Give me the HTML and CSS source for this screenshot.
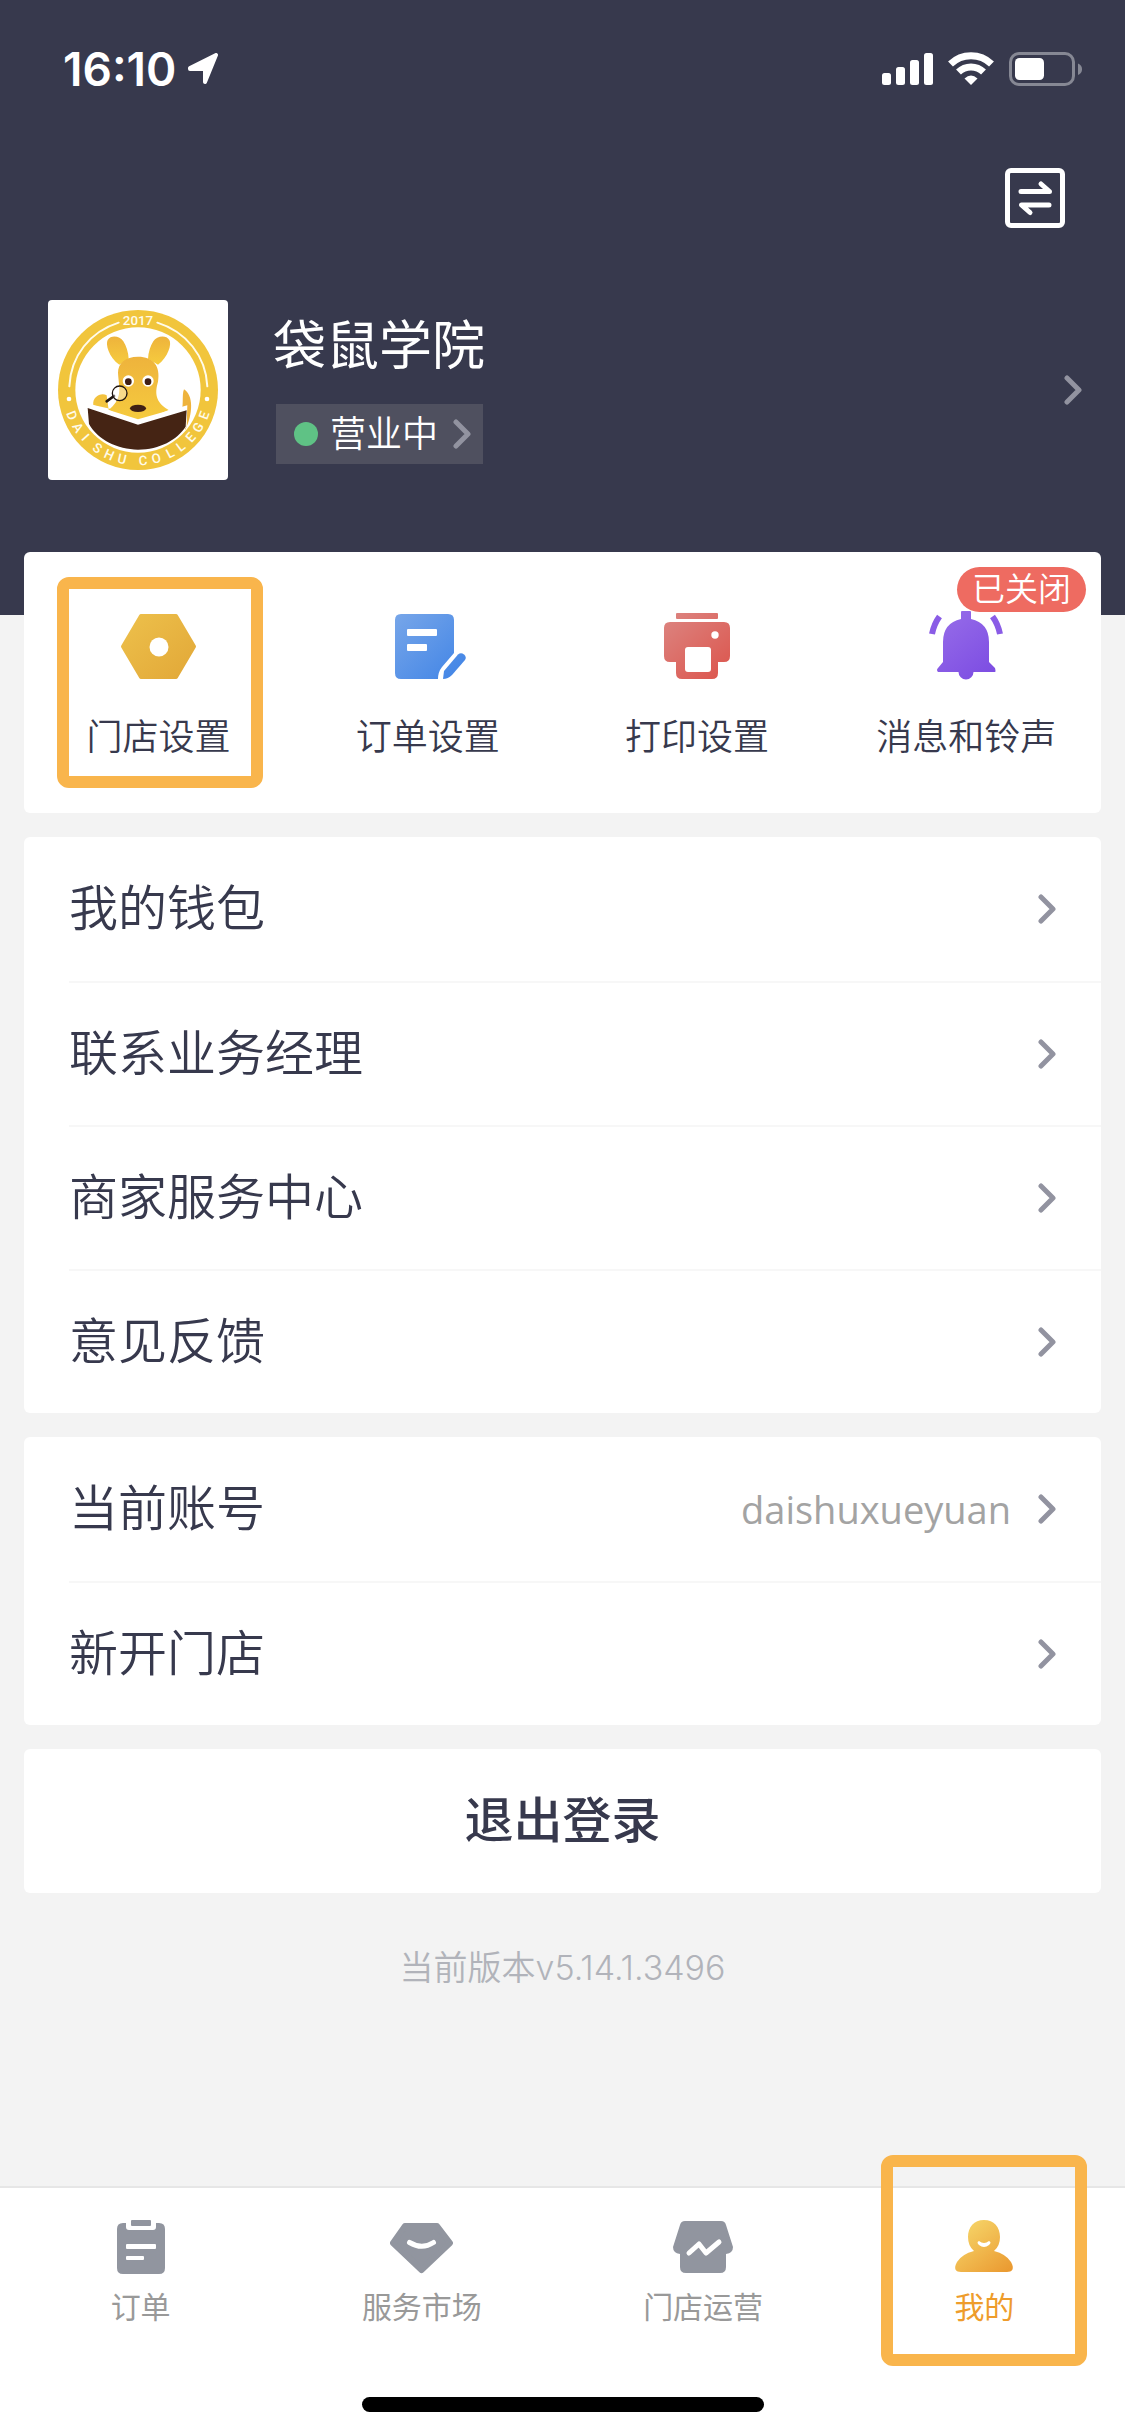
FILE: index.html
```html
<!DOCTYPE html>
<html lang="zh-CN">
<head>
    <meta charset="UTF-8" />
    <meta name="viewport" content="width=device-width, initial-scale=1.0" />
    <title>我的</title>
    <link rel="stylesheet" href="styles.css">
</head>
<body>

<svg class="defs" width="0" height="0" aria-hidden="true">
    <defs>
        <linearGradient id="gold" x1="0" y1="0" x2="1" y2="1">
            <stop offset="0" stop-color="#edc04b" /><stop offset="1" stop-color="#e2a838" />
        </linearGradient>
        <linearGradient id="blue" gradientUnits="userSpaceOnUse" x1="7" y1="4" x2="70" y2="69">
            <stop offset="0" stop-color="#77a6e9" /><stop offset="1" stop-color="#4285e6" />
        </linearGradient>
        <linearGradient id="red" gradientUnits="userSpaceOnUse" x1="7" y1="4" x2="64" y2="69">
            <stop offset="0" stop-color="#dc8581" /><stop offset="1" stop-color="#dc574f" />
        </linearGradient>
        <linearGradient id="purple" gradientUnits="userSpaceOnUse" x1="11" y1="4" x2="64" y2="69">
            <stop offset="0" stop-color="#976de9" /><stop offset="1" stop-color="#7c4ce2" />
        </linearGradient>
        <linearGradient id="person" gradientUnits="userSpaceOnUse" x1="16" y1="2" x2="56" y2="54">
            <stop offset="0" stop-color="#f6d468" /><stop offset="1" stop-color="#ea9930" />
        </linearGradient>
        <linearGradient id="fur" x1="0" y1="0" x2="0" y2="1">
            <stop offset="0" stop-color="#eeb33c" /><stop offset="1" stop-color="#f6cc3e" />
        </linearGradient>
        <symbol id="chevron" viewBox="0 0 18 30">
            <path d="M3 3l12 12L3 27" fill="none" stroke="currentColor" stroke-width="5" stroke-linecap="round" stroke-linejoin="round" />
        </symbol>
    </defs>
</svg>

<header class="hero">
    <div class="status-bar">
        <span class="time">16:10</span>
        <svg class="location" viewBox="0 0 30 32" aria-hidden="true">
            <path d="M2 15L28 2L17 29V16H2z" fill="#fff" stroke="#fff" stroke-width="4" stroke-linejoin="round" />
        </svg>
        <div class="status-icons">
            <svg width="51" height="34" viewBox="0 0 51 34" fill="#fff" aria-hidden="true">
                <rect x="0" y="21" width="9" height="12" rx="2.5" />
                <rect x="14" y="15" width="9" height="18" rx="2.5" />
                <rect x="28" y="8" width="9" height="25" rx="2.5" />
                <rect x="42" y="1" width="9" height="32" rx="2.5" />
            </svg>
            <svg width="46" height="34" viewBox="0 0 46 34" fill="none" stroke="#fff" aria-hidden="true">
                <path d="M2.5 12a29.5 29.5 0 0 1 41 0" stroke-width="7" />
                <path d="M10.5 20a18 18 0 0 1 25 0" stroke-width="7" />
                <path d="M16.500 26.500Q23 20.500 29.500 26.500L23 33z" fill="#fff" stroke="none" />
            </svg>
            <svg width="74" height="34" viewBox="0 0 74 34" aria-hidden="true">
                <rect x="1.500" y="1.500" width="63" height="31" rx="8.500" fill="none" stroke="#868894" stroke-width="3" />
                <rect x="6" y="6" width="29" height="22" rx="4.500" fill="#fff" />
                <path d="M69 11.500Q73 13 73 17.300T69 23z" fill="#868894" />
            </svg>
        </div>
    </div>

    <div class="toolbar">
        <button type="button" class="switch-btn" aria-label="切换门店">
            <svg viewBox="0 0 60 60" fill="none" stroke="#fff" stroke-width="5" stroke-linecap="round" stroke-linejoin="round" aria-hidden="true">
                <rect x="2.500" y="2.500" width="55" height="55" rx="3.500" />
                <path d="M16 23.500H44.500L36 16M44 37H16.500L25 44.500" />
            </svg>
        </button>
    </div>

    <div class="profile">
        <svg class="avatar" viewBox="54 60 540 540" role="img" aria-label="袋鼠学院">
            <circle cx="324" cy="330" r="240" fill="#f1c53c" />
            <circle cx="324" cy="330" r="188" fill="#fff" />
            <path d="M118 319C122 228 180 155 266 128M532 319C528 228 468 155 382 128" fill="none" stroke="#fffbea" stroke-width="6" stroke-linecap="round" />
            <circle cx="117" cy="357" r="7" fill="#fff" />
            <circle cx="531" cy="357" r="7" fill="#fff" />
            <g class="logo-text" text-anchor="middle">
                <text x="324" y="136">2017</text>
                <text x="324" y="556" transform="rotate(69 324 330)">D</text>
                <text x="324" y="556" transform="rotate(58 324 330)">A</text>
                <text x="324" y="556" transform="rotate(48 324 330)">I</text>
                <text x="324" y="556" transform="rotate(35 324 330)">S</text>
                <text x="324" y="556" transform="rotate(24 324 330)">H</text>
                <text x="324" y="556" transform="rotate(13 324 330)">U</text>
                <text x="324" y="556" transform="rotate(-4 324 330)">C</text>
                <text x="324" y="556" transform="rotate(-15 324 330)">O</text>
                <text x="324" y="556" transform="rotate(-27 324 330)">L</text>
                <text x="324" y="556" transform="rotate(-37 324 330)">L</text>
                <text x="324" y="556" transform="rotate(-48 324 330)">E</text>
                <text x="324" y="556" transform="rotate(-58 324 330)">G</text>
                <text x="324" y="556" transform="rotate(-69 324 330)">E</text>
            </g>
            <path d="M462 328C490 345 490 400 466 450L450 400C464 385 454 345 462 328z" fill="#eeb33c" />
            <path d="M268 254C236 232 226 192 233 180C243 164 270 168 280 184Q294 206 296 236zM384 254C414 232 426 192 418 180C408 164 380 168 370 184Q356 206 354 236z" fill="url(#fur)" />
            <path d="M324 230C286 230 264 250 264 278C266 320 280 352 240 386L190 375C186 350 214 336 230 346L236 390L324 430L416 390C376 366 374 340 384 305C392 258 370 230 324 230z" fill="url(#fur)" />
            <circle cx="295" cy="303" r="17" fill="#fff" /><circle cx="295" cy="305" r="10" fill="#402015" />
            <circle cx="354" cy="303" r="17" fill="#fff" /><circle cx="354" cy="305" r="10" fill="#402015" />
            <ellipse cx="324" cy="385" rx="24" ry="11" fill="#402015" />
            <path d="M252 348L230 364" stroke="#201510" stroke-width="8" stroke-linecap="round" />
            <circle cx="269" cy="340" r="22" fill="#fff" fill-opacity=".4" stroke="#201510" stroke-width="4" />
            <path d="M172 370L324 418L472 376L470 440C440 480 395 512 324 514C250 512 200 480 174 432z" fill="#fff" />
            <path d="M173 384L324 434L470 391L467 440C440 480 390 508 324 509C262 508 204 480 177 432z" fill="#452414" />
        </svg>
        <div class="shop">
            <h1>袋鼠学院</h1>
            <button type="button" class="shop-status">
                <span class="dot"></span>
                <span>营业中</span>
                <svg class="chevron" aria-hidden="true"><use href="#chevron" /></svg>
            </button>
        </div>
        <a class="profile-link" href="#" aria-label="门店信息">
            <svg class="chevron" aria-hidden="true"><use href="#chevron" /></svg>
        </a>
    </div>
</header>

<main>
    <section class="card shortcuts">
        <a class="shortcut marked" href="#">
            <svg viewBox="0 0 80 72" aria-hidden="true">
                <path d="M22 6H57L75 36.500L57 67H22L4 36.500z" fill="url(#gold)" stroke="url(#gold)" stroke-width="4" stroke-linejoin="round" />
                <circle cx="40" cy="37" r="9.500" fill="#fff" />
            </svg>
            <span>门店设置</span>
        </a>
        <a class="shortcut" href="#">
            <svg viewBox="0 0 80 72" aria-hidden="true">
                <path d="M13 4H60Q66 4 66 10V43L54 57Q50 62 50 69H13Q7 69 7 63V10Q7 4 13 4z" fill="url(#blue)" />
                <path d="M55 69L56 61L70 44.500Q73 42 76 44.500Q79 47 77 50L64 65Q60 69 55 69z" fill="url(#blue)" />
                <rect x="19" y="19" width="30" height="7" rx="1" fill="#fff" />
                <rect x="19" y="34" width="20" height="7" rx="1" fill="#fff" />
            </svg>
            <span>订单设置</span>
        </a>
        <a class="shortcut" href="#">
            <svg viewBox="0 0 80 72" aria-hidden="true">
                <rect x="19" y="3" width="42" height="6" rx="1" fill="url(#red)" />
                <path d="M13 12H67Q73 12 73 18V46Q73 52 67 52H61V63Q61 69 55 69H25Q19 69 19 63V52H13Q7 52 7 46V18Q7 12 13 12z" fill="url(#red)" />
                <rect x="28" y="37" width="26" height="25" rx="3" fill="#fff" />
                <circle cx="58" cy="25" r="3.700" fill="#fff" />
            </svg>
            <span>打印设置</span>
        </a>
        <a class="shortcut" href="#">
            <em class="badge">已关闭</em>
            <svg viewBox="0 0 80 72" aria-hidden="true">
                <path d="M35 2Q35 1 36 1H44Q45 1 45 2V9Q63 13 63 32V52L69 58Q70 62 69 62H47.500A7.500 7.500 0 0 1 32.500 62H12Q10 60 12 58L17 52V32Q17 13 35 9z" fill="url(#purple)" />
                <path d="M13.500 6.500Q8 14 6 24M66.500 6.500Q72 14 74 24" fill="none" stroke="#8a5ce6" stroke-width="6" />
            </svg>
            <span>消息和铃声</span>
        </a>
    </section>

    <ul class="card menu">
        <li><a href="#"><span>我的钱包</span><svg class="chevron" aria-hidden="true"><use href="#chevron" /></svg></a></li>
        <li><a href="#"><span>联系业务经理</span><svg class="chevron" aria-hidden="true"><use href="#chevron" /></svg></a></li>
        <li><a href="#"><span>商家服务中心</span><svg class="chevron" aria-hidden="true"><use href="#chevron" /></svg></a></li>
        <li><a href="#"><span>意见反馈</span><svg class="chevron" aria-hidden="true"><use href="#chevron" /></svg></a></li>
    </ul>

    <ul class="card menu">
        <li><a href="#"><span>当前账号</span><span class="account">daishuxueyuan</span><svg class="chevron" aria-hidden="true"><use href="#chevron" /></svg></a></li>
        <li><a href="#"><span>新开门店</span><svg class="chevron" aria-hidden="true"><use href="#chevron" /></svg></a></li>
    </ul>

    <button type="button" class="card logout">退出登录</button>

    <p class="version">当前版本v5.14.1.3496</p>
</main>

<footer>
    <nav class="tabs">
        <a class="tab" href="#">
            <svg viewBox="0 0 64 56" fill="#91959f" aria-hidden="true">
                <path d="M14 4H17V8Q17 11 20 11H44Q47 11 47 8V4H50Q56 4 56 10V49Q56 55 50 55H14Q8 55 8 49V10Q8 4 14 4z" />
                <rect x="22" y="1" width="20" height="6" rx="1" />
                <path d="M18 25H46Q47 25 47 26V29Q47 30 46 30H18Q17 30 17 29V26Q17 25 18 25zM18 37H34Q35 37 35 38V40Q35 41 34 41H18Q17 41 17 40V38Q17 37 18 37z" fill="#fff" />
            </svg>
            <span>订单</span>
        </a>
        <a class="tab" href="#">
            <svg viewBox="0 0 64 56" aria-hidden="true">
                <path d="M15 7H47L60 24L31.500 51L3 24z" fill="#91959f" stroke="#91959f" stroke-width="6" stroke-linejoin="round" />
                <path d="M19.500 23.500Q32 31 43.500 23.500" fill="none" stroke="#fff" stroke-width="5" stroke-linecap="round" />
            </svg>
            <span>服务市场</span>
        </a>
        <a class="tab" href="#">
            <svg viewBox="0 0 64 56" aria-hidden="true">
                <path d="M14 2H50Q54 2 55 6L62 28Q62 34 55 35V48Q55 54 49 54H15Q9 54 9 48V35Q2 34 2 28L9 6Q10 2 14 2z" fill="#91959f" />
                <path d="M18 34L28 25L35 34L48 23" fill="none" stroke="#fff" stroke-width="5" stroke-linecap="round" stroke-linejoin="round" />
            </svg>
            <span>门店运营</span>
        </a>
        <a class="tab active marked" href="#">
            <svg viewBox="0 0 64 56" aria-hidden="true">
                <path d="M32 1C42 1 48 8 48 18Q48 27 42 32Q54 35 59 43C63 50 60 53 55 53H9C4 53 1 50 5 43Q10 35 22 32Q16 27 16 18C16 8 22 1 32 1z" fill="url(#person)" />
                <path d="M27 22Q32 26 37 22Q40 23 37 26Q32 30 27 26Q24 23 27 22z" fill="#fff" />
            </svg>
            <span>我的</span>
        </a>
    </nav>
    <div class="home-indicator"></div>
</footer>

</body>
</html>
```
FILE: styles.css
```css
:root {
    --dark: #37394d;
    --bg: #f3f3f3;
    --white: #fff;
    --grey: #999;
    --chevron: #9293a0;
    --mark: #f9b54c;
}

* {
    box-sizing: border-box;
    margin: 0;
    padding: 0;
}

body {
    display: flex;
    flex-direction: column;
    min-height: 100vh;
    font-family: 'Inter', 'Noto Sans CJK SC', sans-serif;
    font-weight: 350;
    background: var(--bg);
    color: var(--dark);
}

a {
    color: inherit;
    text-decoration: none;
}

button {
    border: none;
    background: none;
    font: inherit;
    color: inherit;
    cursor: pointer;
}

.defs {
    position: absolute;
}

.chevron {
    width: 18px;
    height: 30px;
    flex-shrink: 0;
    color: var(--chevron);
}

/* Header */
.hero {
    background: var(--dark);
    color: var(--white);
    padding-bottom: 135px;
}

.status-bar {
    display: flex;
    align-items: center;
    height: 138px;
    padding: 0 42px 0 63px;
}

.time {
    font-size: 46px;
    line-height: 56px;
    font-weight: 600;
}

.location {
    width: 30px;
    height: 32px;
    margin-left: 12px;
}

.status-icons {
    display: flex;
    gap: 15px;
    margin-left: auto;
}

.toolbar {
    display: flex;
    justify-content: flex-end;
    padding: 30px 60px 0;
}

.switch-btn,
.switch-btn svg {
    display: block;
    width: 60px;
    height: 60px;
}

.profile {
    display: flex;
    align-items: center;
    padding: 72px 43px 0 48px;
}

.avatar {
    width: 180px;
    height: 180px;
    border-radius: 4px;
    background: var(--white);
}

.logo-text {
    font-family: 'Liberation Sans Narrow', 'Roboto', sans-serif;
    font-size: 40px;
    font-weight: 500;
    fill: #fffbea;
}

.shop {
    margin-left: 48px;
    padding-bottom: 6px;
}

.shop h1 {
    font-size: 53px;
    line-height: 72px;
    font-weight: 400;
    margin-bottom: 22px;
    margin-left: -3px;
}

.shop-status {
    display: flex;
    align-items: center;
    height: 60px;
    padding: 0 12px 0 18px;
    background: #4f505f;
    font-size: 36px;
    line-height: 54px;
}

.shop-status .dot {
    width: 24px;
    height: 24px;
    margin-right: 12px;
    border-radius: 50%;
    background: #5fc285;
}

.shop-status .chevron {
    margin-left: 15px;
}

.profile-link {
    margin-left: auto;
}

.profile-link .chevron {
    display: block;
}

/* Cards */
main {
    display: flex;
    flex-direction: column;
    gap: 24px;
    padding: 0 24px;
    margin-top: -63px;
}

.card {
    background: var(--white);
    border-radius: 6px;
}

.shortcuts {
    display: grid;
    grid-template-columns: repeat(4, 1fr);
}

.shortcut {
    position: relative;
    display: flex;
    flex-direction: column;
    align-items: center;
    gap: 28px;
    padding: 58px 0 49px;
    font-size: 36px;
    line-height: 54px;
}

.shortcut svg {
    position: relative;
    width: 80px;
    height: 72px;
}

.badge {
    position: absolute;
    top: 15px;
    right: 15px;
    padding: 0 15px;
    border-radius: 23px;
    background: #ee6b61;
    color: var(--white);
    font-size: 33px;
    line-height: 45px;
    font-style: normal;
}

/* Orange frame laid over an entry */
.marked::after {
    content: '';
    position: absolute;
    inset: 25px 30px 25px 33px;
    border: 12px solid var(--mark);
    border-radius: 12px;
}

.menu {
    list-style: none;
    padding-left: 45px;
}

.menu li {
    display: flex;
    min-height: 144px;
}

.menu li + li {
    border-top: 2px solid #f7f7f7;
}

.menu a {
    flex: 1;
    display: flex;
    align-items: center;
    justify-content: space-between;
    padding-right: 45px;
    font-size: 49px;
    line-height: 72px;
}

.menu .account {
    margin-left: auto;
    margin-right: 27px;
    font-family: 'Open Sans', 'Noto Sans', sans-serif;
    font-size: 38px;
    font-weight: 400;
    color: #a3a3a3;
}

.logout {
    min-height: 144px;
    font-size: 49px;
    line-height: 72px;
    font-weight: 500;
}

.version {
    margin-top: 24px;
    text-align: center;
    font-size: 34px;
    line-height: 54px;
    color: #b1b3ba;
}

/* Tab bar */
footer {
    margin-top: auto;
    background: var(--white);
    border-top: 2px solid #e6e6e6;
}

.tabs {
    display: grid;
    grid-template-columns: repeat(4, 1fr);
}

.tab {
    position: relative;
    display: flex;
    flex-direction: column;
    align-items: center;
    gap: 14px;
    padding-top: 31px;
    font-size: 30px;
    line-height: 36px;
    font-weight: 400;
    color: var(--grey);
}

.tab svg {
    width: 64px;
    height: 56px;
}

.tab.active {
    color: #ee9c2c;
}

.tab.marked::after {
    inset: -33px 38px -41px 37px;
}

.home-indicator {
    width: 402px;
    height: 15px;
    margin: 72px auto 24px;
    border-radius: 8px;
    background: #000;
}
```
